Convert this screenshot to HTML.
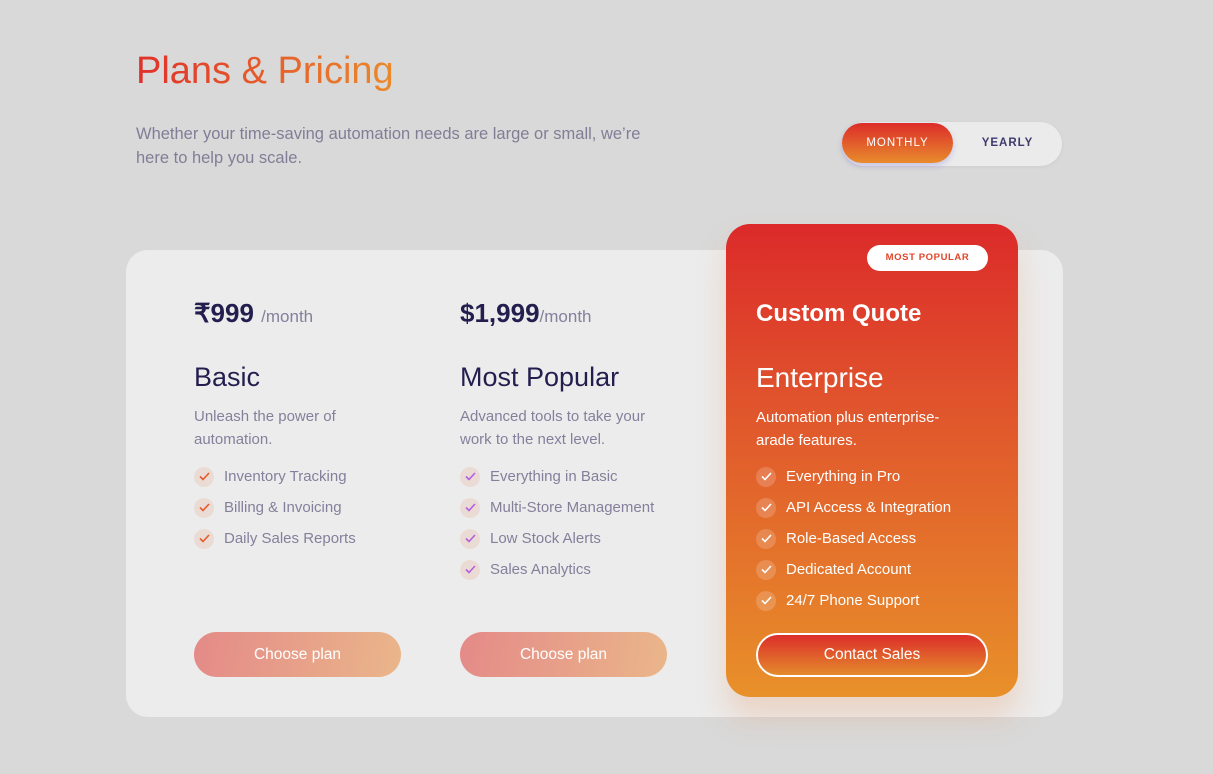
<!DOCTYPE html>
<html><head><meta charset="utf-8"><style>
*{margin:0;padding:0;box-sizing:border-box}
body{width:1213px;height:774px;background:#d9d9d9;font-family:"Liberation Sans",sans-serif;position:relative;overflow:hidden}
.abs{position:absolute}
h1{position:absolute;left:136px;top:50px;font-size:38px;font-weight:400;background:linear-gradient(90deg,#e0302a,#ea8a2c);-webkit-background-clip:text;background-clip:text;color:transparent}
.sub{left:136px;top:122px;font-size:16.5px;line-height:24px;color:#827d96;width:505px}
.toggle{left:842px;top:122px;width:220px;height:44px;border-radius:22px;background:#ebebeb;box-shadow:0 1px 4px rgba(0,0,0,.05)}
.mon{left:842px;top:123px;width:111px;height:40px;border-radius:20px;background:linear-gradient(180deg,#dc2c2a,#e88c2c);color:#fff;font-size:11.5px;letter-spacing:1px;text-align:center;line-height:40px;box-shadow:0 3px 6px rgba(120,110,220,.3)}
.yr{left:953px;top:123px;width:109px;height:40px;color:#3e3a6c;font-size:11.5px;font-weight:700;letter-spacing:1px;text-align:center;line-height:40px}
.card{left:126px;top:250px;width:937px;height:467px;border-radius:22px;background:#ececec}
.ent{left:726px;top:224px;width:292px;height:473px;border-radius:24px;background:linear-gradient(180deg,#dc2a2a 0%,#e0562c 40%,#e8902a 100%);box-shadow:0 20px 30px rgba(230,140,80,.25)}
.badge{left:867px;top:245px;width:121px;height:26px;border-radius:13px;background:#fff;color:#e0452a;font-size:9.5px;font-weight:700;letter-spacing:.6px;text-align:center;line-height:26px}
.price{font-size:26px;font-weight:700;color:#231e4e}
.price span{font-size:17px;font-weight:400;color:#857f9b}
.name{font-size:27px;color:#231e4e}
.desc{font-size:15px;line-height:23px;color:#857f9b}
.feat{font-size:15px;color:#857f9b;height:31px;display:flex;align-items:center}
.ck{width:20px;height:20px;border-radius:50%;background:#eadcd5;margin-right:10px;display:inline-flex;align-items:center;justify-content:center;flex-shrink:0}
.btn{width:207px;height:45px;border-radius:23px;background:linear-gradient(100deg,#e48a88,#eab68a);color:#fff;font-size:15.5px;text-align:center;line-height:45px}
.w{color:#fff}
.ent .ck{background:rgba(255,255,255,.18)}
</style></head><body>
<h1>Plans &amp; Pricing</h1>
<div class="abs sub">Whether your time-saving automation needs are large or small, we’re here to help you scale.</div>
<div class="abs toggle"></div>
<div class="abs mon">MONTHLY</div>
<div class="abs yr">YEARLY</div>
<div class="abs card"></div>

<div class="abs" style="left:194px;top:298px">
<div class="price">₹999 <span>/month</span></div>
<div class="name" style="margin-top:33px">Basic</div>
<div class="desc" style="margin-top:12px">Unleash the power of<br>automation.</div>
<div style="margin-top:10px">
<div class="feat"><span class="ck"><svg width="11" height="9" viewBox="0 0 11 9"><path d="M1 4.5L4 7.5L10 1" fill="none" stroke="#e65a2a" stroke-width="1.6"/></svg></span>Inventory Tracking</div>
<div class="feat"><span class="ck"><svg width="11" height="9" viewBox="0 0 11 9"><path d="M1 4.5L4 7.5L10 1" fill="none" stroke="#e65a2a" stroke-width="1.6"/></svg></span>Billing &amp; Invoicing</div>
<div class="feat"><span class="ck"><svg width="11" height="9" viewBox="0 0 11 9"><path d="M1 4.5L4 7.5L10 1" fill="none" stroke="#e65a2a" stroke-width="1.6"/></svg></span>Daily Sales Reports</div>
</div></div>
<div class="abs btn" style="left:194px;top:632px">Choose plan</div>

<div class="abs" style="left:460px;top:298px">
<div class="price">$1,999<span>/month</span></div>
<div class="name" style="margin-top:33px">Most Popular</div>
<div class="desc" style="margin-top:12px">Advanced tools to take your<br>work to the next level.</div>
<div style="margin-top:10px">
<div class="feat"><span class="ck"><svg width="11" height="9" viewBox="0 0 11 9"><path d="M1 4.5L4 7.5L10 1" fill="none" stroke="#b45ee0" stroke-width="1.6"/></svg></span>Everything in Basic</div>
<div class="feat"><span class="ck"><svg width="11" height="9" viewBox="0 0 11 9"><path d="M1 4.5L4 7.5L10 1" fill="none" stroke="#b45ee0" stroke-width="1.6"/></svg></span>Multi-Store Management</div>
<div class="feat"><span class="ck"><svg width="11" height="9" viewBox="0 0 11 9"><path d="M1 4.5L4 7.5L10 1" fill="none" stroke="#b45ee0" stroke-width="1.6"/></svg></span>Low Stock Alerts</div>
<div class="feat"><span class="ck"><svg width="11" height="9" viewBox="0 0 11 9"><path d="M1 4.5L4 7.5L10 1" fill="none" stroke="#b45ee0" stroke-width="1.6"/></svg></span>Sales Analytics</div>
</div></div>
<div class="abs btn" style="left:460px;top:632px">Choose plan</div>

<div class="abs ent">
<div class="abs" style="left:30px;top:76px;width:250px">
<div class="price w" style="font-size:24px">Custom Quote</div>
<div class="name w" style="margin-top:34px;font-size:28px">Enterprise</div>
<div class="desc w" style="margin-top:12px">Automation plus enterprise-<br>arade features.</div>
<div style="margin-top:9px">
<div class="feat w"><span class="ck"><svg width="11" height="9" viewBox="0 0 11 9"><path d="M1 4.5L4 7.5L10 1" fill="none" stroke="#fff" stroke-width="1.6"/></svg></span>Everything in Pro</div>
<div class="feat w" style="white-space:nowrap;overflow:hidden;width:208px"><span class="ck"><svg width="11" height="9" viewBox="0 0 11 9"><path d="M1 4.5L4 7.5L10 1" fill="none" stroke="#fff" stroke-width="1.6"/></svg></span>API Access &amp; Integration</div>
<div class="feat w"><span class="ck"><svg width="11" height="9" viewBox="0 0 11 9"><path d="M1 4.5L4 7.5L10 1" fill="none" stroke="#fff" stroke-width="1.6"/></svg></span>Role-Based Access</div>
<div class="feat w"><span class="ck"><svg width="11" height="9" viewBox="0 0 11 9"><path d="M1 4.5L4 7.5L10 1" fill="none" stroke="#fff" stroke-width="1.6"/></svg></span>Dedicated Account</div>
<div class="feat w"><span class="ck"><svg width="11" height="9" viewBox="0 0 11 9"><path d="M1 4.5L4 7.5L10 1" fill="none" stroke="#fff" stroke-width="1.6"/></svg></span>24/7 Phone Support</div>
</div></div>
<div class="abs" style="left:30px;top:409px;width:232px;height:44px;border-radius:22px;border:2px solid #fff;background:linear-gradient(180deg,#dc2e2a,#e48a2c);color:#fff;font-size:15.5px;text-align:center;line-height:40px">Contact Sales</div>
</div>
<div class="abs badge">MOST POPULAR</div>
</body></html>
